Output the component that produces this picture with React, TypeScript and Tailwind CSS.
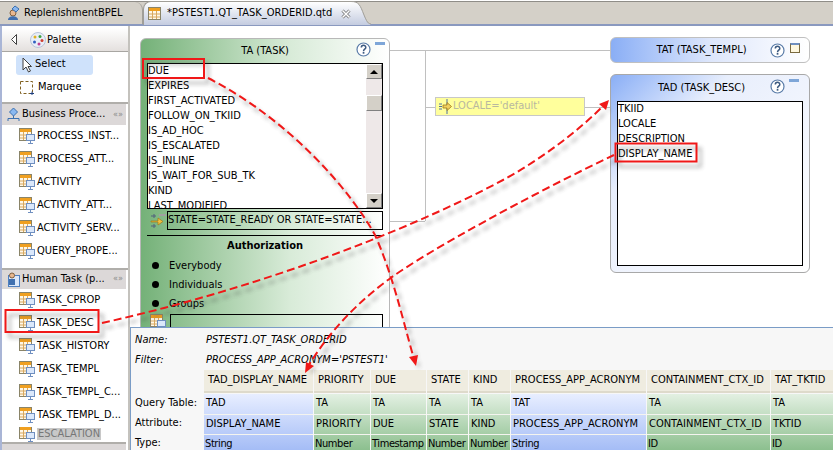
import React from 'react';

const font = "font-['DejaVu_Sans_Condensed','DejaVu_Sans',sans-serif] [font-stretch:condensed]";

function TableIcon() {
    return (
        <svg width="16" height="16" viewBox="0 0 16 16" className="shrink-0">
            <rect x="0.5" y="0.5" width="12" height="12" fill="#fff8e8" stroke="#8a8468" />
            <rect x="1" y="1" width="11" height="3" fill="#f0a020" />
            <path d="M4.5 4v8M8.5 4v8M1 7h11M1 10h11" stroke="#d8a860" />
            <rect x="7.5" y="6.5" width="8" height="6" fill="#dbe8fb" stroke="#6f8fc0" />
            <path d="M11.5 13v2M9 15.5h5" stroke="#6f8fc0" />
        </svg>
    );
}

function HelpIcon() {
    return (
        <svg width="15" height="15" viewBox="0 0 15 15">
            <circle cx="7.5" cy="7.5" r="6.5" fill="#fff" stroke="#5a7ca8" strokeWidth="1.2" />
            <path d="M5.3 5.6c0-3 4.5-3 4.5-.2 0 1.800-2.300 1.800-2.300 3.800" fill="none" stroke="#3c5a80" strokeWidth="1.5" />
            <rect x="6.700" y="10" width="1.700" height="1.700" fill="#3c5a80" />
        </svg>
    );
}

function FilterIcon() {
    return (
        <svg width="17" height="16" viewBox="0 0 17 16" className="shrink-0">
            <rect x="9" y="1" width="7" height="2" fill="#a0a0a0" />
            <path d="M1 3h5M1 13h5M4 1v4M4 11v4" stroke="#50607c" />
            <path d="M1 8h7V5l5 3.500L8 12V9H1z" fill="#f0c040" stroke="#a07818" strokeWidth="0.7" />
        </svg>
    );
}

function PaletteRow({ label }: { label: string }) {
    return (
        <div className="h-[23px] flex items-center gap-[2px] pl-[17px] whitespace-nowrap">
            <TableIcon />
            <span>{label}</span>
        </div>
    );
}

function DrawerHeader({ label, icon, height }: { label: string; icon: React.ReactNode; height: string }) {
    return (
        <div className={`${height} bg-[#dcd8d8] mr-[2px] flex items-center pl-[4px] gap-[1px] whitespace-nowrap`}>
            {icon}
            <span className="flex-1">{label}</span>
            <span className="text-[#8a8a8a] text-[9px] pr-[3px]">«»</span>
        </div>
    );
}

function Palette() {
    return (
        <div className="w-[130px] shrink-0 bg-white border-l-2 border-r-2 border-l-[#a9b5d6] border-r-[#c4c2bd] flex flex-col overflow-hidden">
            <div className="h-[24px] mt-[2px] pt-[1px] border-b border-[#a8a6a2] bg-gradient-to-b from-white to-[#e4e0de] flex items-center pl-[9px] gap-[1px]">
                <svg width="6" height="11" viewBox="0 0 6 11"><path d="M5.500 .5v10L.5 5.500z" fill="#fff" stroke="#404040" /></svg>
                <svg width="16" height="16" viewBox="0 0 16 16" className="ml-[12px]">
                    <circle cx="8" cy="8" r="7.500" fill="#e8eef8" stroke="#b8c4d8" />
                    <circle cx="5" cy="5" r="1.500" fill="#e0b020" />
                    <circle cx="10" cy="4.500" r="1.500" fill="#40a040" />
                    <circle cx="12" cy="8.500" r="1.500" fill="#d04030" />
                    <circle cx="4.500" cy="10" r="1.500" fill="#3060c0" />
                    <circle cx="9" cy="12" r="1.500" fill="#c04090" />
                </svg>
                <span>Palette</span>
            </div>
            <div className="h-[54px] border-b-2 border-[#b0aeaa] pt-[3px] pl-[14px]">
                <div className="w-[77px] h-[20px] bg-[#cfe2fb] rounded-[3px] flex items-center gap-[3px] pl-[6px]">
                    <svg width="10" height="16" viewBox="0 0 10 16"><path d="M1 1v12l3-3 2.500 5 2-1-2.500-4.500H9.500z" fill="#fff" stroke="#404040" /></svg>
                    <span>Select</span>
                </div>
                <div className="h-[23px] flex items-center gap-[4px] pl-[4px] mt-[1px]">
                    <svg width="14" height="15" viewBox="0 0 14 15"><rect x="0.5" y="1.500" width="12" height="12" fill="none" stroke="#806020" strokeDasharray="3 2" /><path d="M10 13.500h4M12 11.500v3.500" stroke="#204080" /></svg>
                    <span>Marquee</span>
                </div>
            </div>
            <DrawerHeader
                label="Business Proce..."
                height="h-[21px]"
                icon={
                    <svg width="15" height="15" viewBox="0 0 15 15" className="shrink-0">
                        <path d="M7.500 1l4 4-4 4-4-4z" fill="#8ab8f0" stroke="#3a70b0" />
                        <path d="M7.500 9v2M2 14v-2.500h11V14" fill="none" stroke="#3a70b0" />
                    </svg>
                }
            />
            <div className="pb-[5px] border-b-2 border-[#b0aeaa]">
                {['PROCESS_INST...', 'PROCESS_ATT...', 'ACTIVITY', 'ACTIVITY_ATT...', 'ACTIVITY_SERV...', 'QUERY_PROPE...'].map((t) => (
                    <PaletteRow key={t} label={t} />
                ))}
            </div>
            <DrawerHeader
                label="Human Task (p..."
                height="h-[19px]"
                icon={
                    <svg width="15" height="15" viewBox="0 0 15 15" className="shrink-0">
                        <rect x="2.500" y="3.500" width="11" height="11" fill="#dbe8fb" stroke="#5080c0" />
                        <circle cx="6" cy="3.500" r="2.500" fill="#e8b890" stroke="#806040" />
                        <rect x="3" y="7" width="6" height="6" fill="#4070b0" />
                    </svg>
                }
            />
            <div>
                {['TASK_CPROP', 'TASK_DESC', 'TASK_HISTORY', 'TASK_TEMPL', 'TASK_TEMPL_C...', 'TASK_TEMPL_D...'].map((t) => (
                    <PaletteRow key={t} label={t} />
                ))}
            </div>
            <div className="h-[16px] flex items-center gap-[2px] pl-[17px] overflow-hidden text-[#777]">
                <TableIcon />
                <span className="bg-[#c8c8c8] px-[1px] leading-[12px]">ESCALATION</span>
            </div>
            <div className="border-t-2 border-[#b0aeaa] h-[8px] bg-[#dcd8d8] mr-[2px]" />
        </div>
    );
}

function ListBox({ items, className }: { items: string[]; className: string }) {
    return (
        <div className={`border border-black bg-white overflow-hidden leading-[15px] ${className}`}>
            {items.map((t, i) => (
                <div key={t} className={i === 0 ? 'h-[15px] whitespace-nowrap -mt-px' : 'h-[15px] whitespace-nowrap'}>{t}</div>
            ))}
        </div>
    );
}

function TaskNode() {
    return (
        <div className="absolute left-[10px] top-[12px] w-[250px] h-[320px] rounded-[6px] border border-[#b8b8b8] bg-gradient-to-r from-[#74b178] via-[#d8ebd8] via-60% to-white px-[6px]">
            <div className="h-[24px] relative flex items-center justify-center">
                <span>TA (TASK)</span>
                <div className="absolute left-[209px] top-[3px]"><HelpIcon /></div>
                <div className="absolute left-[228px] top-[3px] w-[10px] h-[3px] bg-[#7ea6d8]" />
            </div>
            <div className="relative h-[146px] border border-black bg-white overflow-hidden leading-[15px]">
                {['DUE', 'EXPIRES', 'FIRST_ACTIVATED', 'FOLLOW_ON_TKIID', 'IS_AD_HOC', 'IS_ESCALATED', 'IS_INLINE', 'IS_WAIT_FOR_SUB_TK', 'KIND', 'LAST_MODIFIED'].map((t, i) => (
                    <div key={t} className={i === 0 ? 'h-[15px] whitespace-nowrap -mt-px' : 'h-[15px] whitespace-nowrap'}>{t}</div>
                ))}
                <div className="absolute right-[0px] top-[0px] bottom-[0px] w-[16px] bg-[#eee8e8] flex flex-col justify-between">
                    <div className="h-[15px] bg-[#d4d0c8] border border-t-white border-l-white border-r-[#808080] border-b-[#808080] flex items-center justify-center">
                        <div className="w-0 h-0 border-x-[4px] border-x-transparent border-b-[4px] border-b-black" />
                    </div>
                    <div className="absolute top-[31px] left-0 right-0 h-[16px] bg-[#d4d0c8] border border-t-white border-l-white border-r-[#808080] border-b-[#808080]" />
                    <div className="h-[15px] bg-[#d4d0c8] border border-t-white border-l-white border-r-[#808080] border-b-[#808080] flex items-center justify-center">
                        <div className="w-0 h-0 border-x-[4px] border-x-transparent border-t-[4px] border-t-black" />
                    </div>
                </div>
            </div>
            <div className="flex items-center mt-[2px] h-[19px] pl-[3px]">
                <FilterIcon />
                <div className="w-[216px] h-[19px] border border-black leading-[16px] whitespace-nowrap overflow-hidden">STATE=STATE_READY OR STATE=STATE...</div>
            </div>
            <div className="border-t border-black mt-[5px] pt-[2px] text-center font-bold leading-[15px]">Authorization</div>
            <div className="mt-[3px] leading-[19px]">
                {['Everybody', 'Individuals', 'Groups'].map((t) => (
                    <div key={t} className="h-[19px] flex items-center pl-[5px]">
                        <div className="w-[7px] h-[7px] rounded-full bg-black" />
                        <span className="ml-[10px]">{t}</span>
                    </div>
                ))}
            </div>
            <div className="flex mt-[1px] pl-[3px] gap-[4px]">
                <TableIcon />
                <div className="flex-1 h-[30px] border border-black" />
            </div>
        </div>
    );
}

function Canvas() {
    return (
        <div className="relative flex-1 bg-white overflow-hidden">
            {/* connector lines */}
            <div className="absolute left-[260px] top-[24px] w-[220px] h-px bg-[#c0c0c0]" />
            <div className="absolute left-[295px] top-[24px] w-px h-[171px] bg-[#c0c0c0]" />
            <div className="absolute left-[260px] top-[195px] w-[35px] h-px bg-[#c0c0c0]" />
            <div className="absolute left-[295px] top-[81px] w-[185px] h-px bg-[#c0c0c0]" />
            <TaskNode />
            <div className="absolute left-[305px] top-[71px] w-[150px] h-[19px] border border-[#c8c8c8] bg-[#ffff9c] flex items-center text-[#b8b8a0] pl-[2px]">
                <svg width="15" height="15" viewBox="0 0 15 15" className="shrink-0">
                    <path d="M1 5h3M1 7.500h3M1 10h3M9 0v15" stroke="#5070a0" />
                    <path d="M5 6h4V3.500l4.500 4-4.500 4V9H5z" fill="#f0d060" stroke="#a07818" strokeWidth="0.8" />
                </svg>
                <span>LOCALE='default'</span>
            </div>
            <div className="absolute left-[480px] top-[11px] w-[200px] h-[26px] rounded-[6px] border border-[#c0c0c0] bg-gradient-to-r from-[#8aaef5] via-[#dde6fb] via-50% to-white flex items-center justify-center">
                <span className="pr-[17px]">TAT (TASK_TEMPL)</span>
                <div className="absolute left-[159px] top-[5px]"><HelpIcon /></div>
                <div className="absolute left-[179px] top-[5px] w-[10px] h-[10px] border border-[#7a6a40] bg-[#fff8e0] border-t-2 border-t-[#6f8fc0]" />
            </div>
            <div className="absolute left-[480px] top-[48px] w-[200px] h-[199px] rounded-[6px] border border-[#a8a8a8] bg-gradient-to-br from-[#8aaef5] via-[#e8eefc] via-30% to-white px-[6px]">
                <div className="h-[26px] relative flex items-center justify-center">
                    <span className="pr-[17px]">TAD (TASK_DESC)</span>
                    <div className="absolute left-[153px] top-[4px]"><HelpIcon /></div>
                    <div className="absolute left-[172px] top-[4px] w-[10px] h-[3px] bg-[#7ea6d8]" />
                </div>
                <ListBox items={['TKIID', 'LOCALE', 'DESCRIPTION', 'DISPLAY_NAME']} className="h-[165px]" />
            </div>
        </div>
    );
}

const columns = [
    { w: 'w-[109px]', head: 'TAD_DISPLAY_NAME', table: 'TAD', attr: 'DISPLAY_NAME', type: 'String', blue: true },
    { w: 'w-[56px]', head: 'PRIORITY', table: 'TA', attr: 'PRIORITY', type: 'Number' },
    { w: 'w-[55px]', head: 'DUE', table: 'TA', attr: 'DUE', type: 'Timestamp' },
    { w: 'w-[41px]', head: 'STATE', table: 'TA', attr: 'STATE', type: 'Number' },
    { w: 'w-[41px]', head: 'KIND', table: 'TA', attr: 'KIND', type: 'Number' },
    { w: 'w-[135px]', head: 'PROCESS_APP_ACRONYM', table: 'TAT', attr: 'PROCESS_APP_ACRONYM', type: 'String', blue: true },
    { w: 'w-[123px]', head: 'CONTAINMENT_CTX_ID', table: 'TA', attr: 'CONTAINMENT_CTX_ID', type: 'ID' },
    { w: 'w-[62px]', head: 'TAT_TKTID', table: 'TA', attr: 'TKTID', type: 'ID' },
];

function QueryColumn({ col }: { col: (typeof columns)[number] }) {
    const cell = 'h-[20px] px-[2px] leading-[18px] whitespace-nowrap overflow-hidden';
    return (
        <div className={`${col.w} shrink-0 mr-px`}>
            <div className="h-[23px] bg-[#efece0] border-b-[2px] border-[#dedacb] flex items-center pl-[4px] whitespace-nowrap overflow-hidden">{col.head}</div>
            <div className={col.blue ? 'bg-gradient-to-b from-[#e8eeff] to-[#a0b9f5] mt-px' : 'bg-gradient-to-b from-[#e3f0e2] to-[#86bc89] mt-px'}>
                <div className={cell}>{col.table}</div>
                <div className={`${cell} border-t border-[#f4f4ef]`}>{col.attr}</div>
                <div className="h-[20px] pl-px leading-[18px] whitespace-nowrap tracking-[-0.4px] border-t border-[#f4f4ef]">{col.type}</div>
            </div>
        </div>
    );
}

function QueryPanel() {
    return (
        <div className="h-[123px] border-t border-l border-[#7a9cc6] bg-[#f7f7f7] pl-[4px] overflow-hidden">
            <div className="flex h-[20px] mt-[2px] items-center italic"><span className="w-[71px]">Name:</span><span>PSTEST1.QT_TASK_ORDERID</span></div>
            <div className="flex h-[20px] items-center italic"><span className="w-[71px]">Filter:</span><span>PROCESS_APP_ACRONYM='PSTEST1'</span></div>
            <div className="flex">
                <div className="w-[69px] shrink-0 pt-[23px] leading-[20px]">
                    <div className="h-[20px]">Query Table:</div>
                    <div className="h-[20px]">Attribute:</div>
                    <div className="h-[20px]">Type:</div>
                </div>
                <div className="flex">
                    {columns.map((c) => (
                        <QueryColumn key={c.head} col={c} />
                    ))}
                </div>
            </div>
        </div>
    );
}

function Annotations() {
    const paths = [
        'M208 78C290 120 350 190 375 235C395 280 405 330 415 362',
        'M102 323C250 290 400 235 503 180C540 160 580 130 605 104',
        'M614 155C530 195 430 250 392 277C360 300 330 330 307 368',
    ];
    const rects = [
        { x: 143, y: 59, w: 61, h: 19 },
        { x: 5.500, y: 310, w: 93, h: 22 },
        { x: 615.500, y: 143.500, w: 81, h: 18 },
    ];
    return (
        <svg width="833" height="450" viewBox="0 0 833 450" className="absolute left-0 top-0 pointer-events-none">
            <defs>
                <filter id="soft" x="-20%" y="-20%" width="140%" height="140%"><feGaussianBlur stdDeviation="2" /></filter>
            </defs>
            <g filter="url(#soft)" opacity="0.45" transform="translate(4 5)" fill="none" stroke="#404040" strokeWidth="2">
                {paths.map((d) => <path key={d} d={d} strokeDasharray="8 4" />)}
                {rects.map((r) => <rect key={r.x} x={r.x} y={r.y} width={r.w} height={r.h} />)}
            </g>
            <g fill="none" stroke="#f01818" strokeWidth="2">
                {paths.map((d) => <path key={d} d={d} strokeDasharray="8 4" />)}
                {rects.map((r) => <rect key={r.x} x={r.x} y={r.y} width={r.w} height={r.h} />)}
            </g>
            <path d="M416 366l-7-9 9-2z" fill="#f01818" />
            <path d="M609 100l-3 10-7-6z" fill="#f01818" />
            <path d="M305 373l1-11 8 4z" fill="#f01818" />
        </svg>
    );
}

export default function App() {
    return (
        <div className={`relative w-[833px] h-[450px] overflow-hidden bg-white text-[11px] text-black ${font}`}>
            <div className="h-[26px] pt-px">
                <div className="h-[25px] bg-[#d4d0c8] border-t border-t-[#8f8d88] border-b-2 border-b-[#8a99bf] flex items-end">
                    <div className="w-[143px] h-[22px] flex items-center gap-[3px] pl-[5px] rounded-tr-[8px] border-r border-[#a09e98] whitespace-nowrap">
                        <svg width="16" height="16" viewBox="0 0 16 16">
                            <circle cx="8" cy="8" r="3" fill="#e8b890" stroke="#806040" />
                            <path d="M3 15c0-5 10-5 10 0z" fill="#4070b0" />
                            <path d="M7 4l3-3 4 3-3 3z" fill="#8ab8f0" stroke="#3a70b0" />
                        </svg>
                        <span>ReplenishmentBPEL</span>
                    </div>
                    <div className="h-[24px] flex -mb-[1px]">
                        <div className="w-[208px] bg-gradient-to-b from-white to-[#c4cce0] rounded-tl-[8px] border-l border-t border-[#a09e98] flex items-center pl-[4px] gap-[5px] whitespace-nowrap">
                            <svg width="14" height="14" viewBox="0 0 14 14" className="shrink-0">
                                <rect x="0.5" y="0.5" width="12" height="12" fill="#fff8e8" stroke="#8a8468" />
                                <rect x="1" y="1" width="11" height="3" fill="#f0a020" />
                                <path d="M4.500 4v8M8.500 4v8M1 7h11M1 10h11" stroke="#d8a860" />
                            </svg>
                            <span>*PSTEST1.QT_TASK_ORDERID.qtd</span>
                            <svg width="10" height="10" viewBox="0 0 10 10" className="ml-[4px] shrink-0">
                                <path d="M1.500 1.500l7 7M8.500 1.500l-7 7" stroke="#707070" strokeWidth="3" />
                                <path d="M1.500 1.500l7 7M8.500 1.500l-7 7" stroke="#fff" strokeWidth="1.500" />
                            </svg>
                        </div>
                        <svg width="20" height="24" viewBox="0 0 20 24" className="shrink-0">
                            <defs>
                                <linearGradient id="tabfill" x1="0" y1="0" x2="0" y2="1">
                                    <stop offset="0" stopColor="#ffffff" />
                                    <stop offset="1" stopColor="#c4cce0" />
                                </linearGradient>
                            </defs>
                            <path d="M0 .5C8 .5 9 4 13 14s5 8 7 10H0z" fill="url(#tabfill)" />
                            <path d="M0 .5C8 .5 9 4 13 14s5 8 7 9" fill="none" stroke="#a09e98" />
                        </svg>
                    </div>
                </div>
            </div>
            <div className="flex h-[424px]">
                <Palette />
                <div className="flex-1 flex flex-col min-w-0">
                    <Canvas />
                    <QueryPanel />
                </div>
            </div>
            <Annotations />
        </div>
    );
}
